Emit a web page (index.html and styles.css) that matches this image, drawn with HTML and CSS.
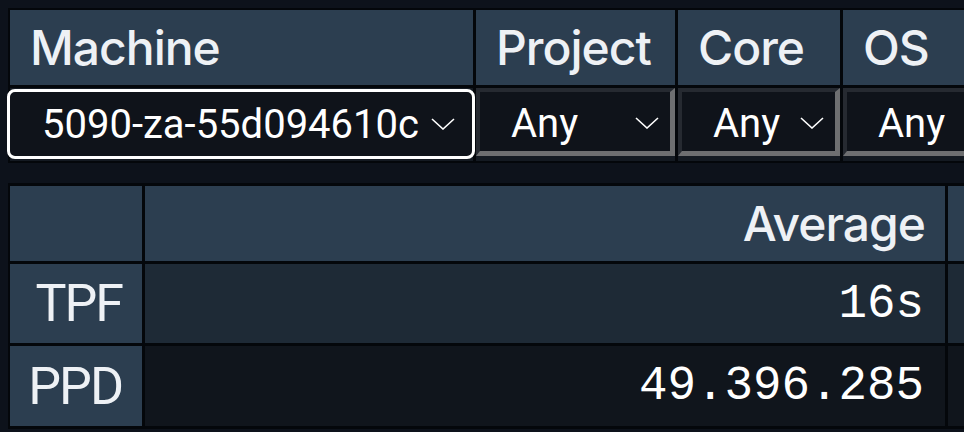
FILE: index.html
```html
<!DOCTYPE html>
<html lang="en">
<head>
<meta charset="utf-8">
<title>Machine stats</title>
<link rel="stylesheet" href="styles.css">
</head>
<body>
<div class="filters">
  <div class="th">Machine</div>
  <div class="th">Project</div>
  <div class="th">Core</div>
  <div class="th">OS</div>

  <div class="td">
    <div class="sel sel-focus">
      <span class="sel-text">5090-za-55d094610c</span>
      <svg class="chev" viewBox="0 0 24 12"><polyline points="1,1 12,11 23,1"/></svg>
    </div>
  </div>
  <div class="td">
    <div class="sel">
      <span class="sel-text">Any</span>
      <svg class="chev" viewBox="0 0 24 12"><polyline points="1,1 12,11 23,1"/></svg>
    </div>
  </div>
  <div class="td">
    <div class="sel">
      <span class="sel-text">Any</span>
      <svg class="chev" viewBox="0 0 24 12"><polyline points="1,1 12,11 23,1"/></svg>
    </div>
  </div>
  <div class="td">
    <div class="sel">
      <span class="sel-text">Any</span>
      <svg class="chev" viewBox="0 0 24 12"><polyline points="1,1 12,11 23,1"/></svg>
    </div>
  </div>
</div>

<div class="stats">
  <div class="th"></div>
  <div class="th th-right">Average</div>
  <div class="th"></div>

  <div class="rh">TPF</div>
  <div class="val val-mid">16s</div>
  <div class="val val-mid"></div>

  <div class="rh">PPD</div>
  <div class="val val-dark">49.396.285</div>
  <div class="val val-dark"></div>
</div>
</body>
</html>
```
FILE: styles.css
```css
html, body {
  margin: 0;
  padding: 0;
  overflow: hidden;
  background: #0d121b;
}

body {
  padding: 8px 0 0 8px;
  width: 964px;
  height: 432px;
  box-sizing: border-box;
}

.filters {
  display: grid;
  grid-template-columns: 463px 199px 162px 200px;
  grid-template-rows: 75px 73px;
  gap: 3px;
  padding: 2px;
  background: #04070b;
  width: max-content;
}

.th {
  background: #2c3e50;
  color: #eef1f5;
  font-family: "Inter", "DejaVu Sans", sans-serif;
  font-size: 48px;
  font-weight: 500;
  display: flex;
  align-items: center;
  padding: 0 20px;
  letter-spacing: -1px;
  white-space: nowrap;
}

.th-right {
  justify-content: flex-end;
}

.td {
  background: #141a22;
  display: flex;
  padding: 0 0 5px 0;
}

.sel {
  flex: 1;
  display: flex;
  align-items: center;
  gap: 18px;
  background: #0f131a;
  color: #ffffff;
  font-family: "Roboto", sans-serif;
  font-size: 40px;
  white-space: nowrap;
  border-style: solid;
  border-width: 4px 5px 5px 4px;
  border-color: #262a31 #6e6f71 #6e6f71 #262a31;
  padding: 3px 11px 0 31px;
}

.sel-focus {
  border: 3px solid #ffffff;
  border-radius: 8px;
  margin: 1px -2px -3px -3px;
  padding: 0 17px 0 32px;
  gap: 12px;
}

.chev {
  width: 24px;
  height: 12px;
  margin-left: auto;
  flex: none;
}

.chev polyline {
  fill: none;
  stroke: #ffffff;
  stroke-width: 1.6;
}

.stats {
  margin-top: 20px;
  display: grid;
  grid-template-columns: 132px 800px 100px;
  grid-template-rows: 75px 79px 80px;
  gap: 3px;
  padding: 3px 0 3px 2px;
  background: #04070b;
  width: max-content;
}

.rh {
  background: #2c3e50;
  color: #eef1f5;
  font-family: "Roboto", "Liberation Sans", sans-serif;
  font-size: 52px;
  letter-spacing: -2px;
  display: flex;
  align-items: center;
  justify-content: flex-end;
  padding: 0 20px 0 0;
}

.val {
  color: #ffffff;
  font-family: "Liberation Mono", monospace;
  font-size: 47.5px;
  display: flex;
  align-items: center;
  justify-content: flex-end;
  padding: 0 21px 0 0;
  white-space: nowrap;
}

.val-mid {
  background: #1e2a36;
}

.val-dark {
  background: #10151c;
}
```
